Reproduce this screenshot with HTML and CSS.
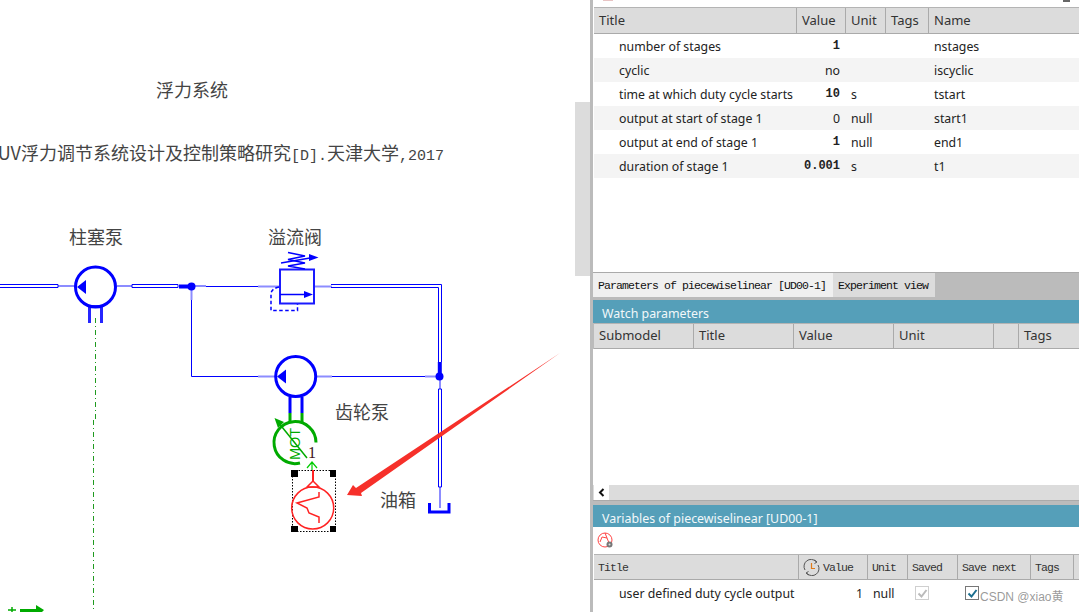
FILE: index.html
```html
<!DOCTYPE html>
<html lang="en">
<head>
    <meta charset="UTF-8">
    <meta name="viewport" content="width=device-width, initial-scale=1.0">
    <title>Hydraulic model - parameters</title>
    <link rel="stylesheet" href="styles.css">
</head>
<body>
    <div class="canvas">
        <span class="label label-title">浮力系统</span>
        <span class="label label-cite">UV浮力调节系统设计及控制策略研究<span class="hw">[D].</span>天津大学<span class="hw">,2017</span></span>
        <span class="label label-plunger">柱塞泵</span>
        <span class="label label-relief">溢流阀</span>
        <span class="label label-gear">齿轮泵</span>
        <span class="label label-tank">油箱</span>

        <svg class="diagram" width="590" height="612" viewBox="0 0 590 612" fill="none">
            <!-- shaft links -->
            <path d="M95.5 318V420M93.5 420V612" stroke="#1f9a1f" stroke-width="1" stroke-dasharray="5 3 1 3"/>

            <!-- pipes -->
            <g stroke="#00f" stroke-width="1">
                <path d="M0 284.5H58V287.5H0"/>
                <path d="M132 284.5H178V287.5H132Z"/>
                <path d="M206 286.5H258"/>
                <path d="M191.5 300V376.5H258"/>
                <path d="M331 284.5H441.5V362M331 287.5H438.5V362"/>
                <path d="M332 376.5H425"/>
                <path d="M438.5 389H441.5V487H438.5Z"/>
            </g>
            <g stroke="#00f" stroke-opacity=".45" stroke-width="2">
                <path d="M58 286H75M117 286H132M191.5 286H206M191.5 290V300"/>
                <path d="M258 286.5H280M314 286.5H332"/>
                <path d="M258 376.5H275M317 376.5H332M425 376.5H436"/>
                <path d="M440 380V389M440 487V508"/>
            </g>
            <path d="M179 286.5H191M439.8 362V376" stroke="#00f" stroke-width="4"/>
            <circle cx="191.5" cy="286.5" r="4" fill="#00f"/>
            <circle cx="439.5" cy="376.5" r="4" fill="#00f"/>
            <path d="M429.5 503V512H449V503" stroke="#00f" stroke-width="3"/>

            <!-- plunger pump -->
            <circle cx="95.5" cy="287" r="20" stroke="#00f" stroke-width="3"/>
            <path d="M77 287L86 280V294Z" fill="#00f"/>
            <path d="M89.5 323V306.5H101.5V323" stroke="#00f" stroke-width="3" stroke-opacity=".85"/>

            <!-- relief valve -->
            <rect x="280" y="269.5" width="34" height="34" stroke="#1a1aff" stroke-width="2"/>
            <path d="M280 294.5H305" stroke="#00f" stroke-width="1.5"/>
            <path d="M313 294.5L304 291V298Z" fill="#00f"/>
            <path d="M288 252.5L305 256L288 259.5L305 263L288 266L305 269" stroke="#00f" stroke-width="1.5"/>
            <path d="M281 263L310 258" stroke="#00f" stroke-width="1.5"/>
            <path d="M318.5 257.5L309 254V261Z" fill="#00f"/>
            <path d="M279 287Q271 289 271 294V310.5H297.5V304" stroke="#00f" stroke-width="1.5" stroke-dasharray="3.5 2.5"/>

            <!-- gear pump -->
            <circle cx="295.7" cy="376.5" r="20" stroke="#00f" stroke-width="3"/>
            <path d="M277 376.5L286 369.5V383.5Z" fill="#00f"/>
            <path d="M290 397V413M302 397V413" stroke="#00f" stroke-width="3"/>
            <path d="M290 413V422M302 413V422" stroke="#0a0" stroke-width="3"/>

            <!-- motor -->
            <path d="M316 442.5A21 21 0 1 0 300 463" stroke="#0a0" stroke-width="3"/>
            <path d="M278 422L307 458" stroke="#0a0" stroke-width="1.5"/>
            <path d="M274.5 418L284 422L278 428Z" fill="#0a0"/>
            <text class="motor-text" transform="translate(300 460) rotate(-90)">MOT</text>
            <text class="motor-num" x="308" y="458">1</text>
            <path d="M307 468L312 462L317 468M312 462V470" stroke="#0c0" stroke-width="1.2"/>

            <!-- piecewise linear source, selected -->
            <rect x="292.5" y="470.5" width="43" height="61" stroke="#000" stroke-dasharray="1.5 1.5"/>
            <path d="M291 470h7v7h-7zM330 470h6v7h-6zM291 526h7v6h-7zM330 526h6v6h-6z" fill="#000"/>
            <g stroke="#f22">
                <path d="M313 470V481" stroke-width="2"/>
                <path d="M313 481L307 487H319Z" stroke-width="1.5"/>
                <circle cx="312.7" cy="508" r="21" stroke-width="1.5"/>
                <path d="M319 492V497L297 503L307 508L309 513L319 517V523" stroke-width="1.5"/>
            </g>

            <!-- annotation arrow -->
            <path d="M560 353L361 493L362 496L347 495L353 485L356 488Z" fill="#f6302a"/>

            <!-- next element, cut off by the bottom edge -->
            <path d="M12 607V612M8 610H16" stroke="#0a0" stroke-width="1.5"/>
            <path d="M20 609H36V605L44 610L42 612H20Z" fill="#0a0"/>
        </svg>
        <div class="canvas-scroll"></div>
    </div>

    <div class="panel">
        <section class="params">
            <div class="top-strip">
                <span class="strip-mark strip-red"></span>
                <span class="strip-mark strip-dark"></span>
            </div>
            <div class="grid-head params-cols">
                <div>Title</div>
                <div>Value</div>
                <div>Unit</div>
                <div>Tags</div>
                <div>Name</div>
            </div>
            <div class="row params-cols">
                <div class="title">number of stages</div>
                <div class="value bold">1</div>
                <div class="unit"></div>
                <div></div>
                <div class="name">nstages</div>
            </div>
            <div class="row alt params-cols">
                <div class="title">cyclic</div>
                <div class="value">no</div>
                <div class="unit"></div>
                <div></div>
                <div class="name">iscyclic</div>
            </div>
            <div class="row params-cols">
                <div class="title">time at which duty cycle starts</div>
                <div class="value bold">10</div>
                <div class="unit">s</div>
                <div></div>
                <div class="name">tstart</div>
            </div>
            <div class="row alt params-cols">
                <div class="title">output at start of stage 1</div>
                <div class="value">0</div>
                <div class="unit">null</div>
                <div></div>
                <div class="name">start1</div>
            </div>
            <div class="row params-cols">
                <div class="title">output at end of stage 1</div>
                <div class="value bold">1</div>
                <div class="unit">null</div>
                <div></div>
                <div class="name">end1</div>
            </div>
            <div class="row alt params-cols">
                <div class="title">duration of stage 1</div>
                <div class="value bold">0.001</div>
                <div class="unit">s</div>
                <div></div>
                <div class="name">t1</div>
            </div>
        </section>

        <div class="tabs">
            <div class="tab tab-active">Parameters of piecewiselinear [UD00-1]</div>
            <div class="tab">Experiment view</div>
        </div>

        <section class="watch">
            <h2 class="band band-watch">Watch parameters</h2>
            <div class="grid-head watch-cols">
                <div>Submodel</div>
                <div>Title</div>
                <div>Value</div>
                <div>Unit</div>
                <div></div>
                <div>Tags</div>
            </div>
            <div class="watch-body"></div>
            <div class="hscroll">
                <div class="hscroll-btn">
                    <svg width="7" height="9" viewBox="0 0 7 9" fill="none"><path d="M5.5 1L2 4.5L5.5 8" stroke="#111" stroke-width="2"/></svg>
                </div>
            </div>
        </section>

        <section class="vars">
            <h2 class="band">Variables of piecewiselinear [UD00-1]</h2>
            <div class="toolbar">
                <svg width="18" height="18" viewBox="0 0 18 18" fill="none">
                    <circle cx="8" cy="8" r="7" stroke="#f44" stroke-width="1"/>
                    <path d="M8 1L10 6L5 5L3 10M10 6L12 11" stroke="#f44" stroke-width="1"/>
                    <circle cx="12.5" cy="12.5" r="3" fill="#777"/>
                    <circle cx="12.5" cy="12.5" r="1" fill="#ddd"/>
                </svg>
            </div>
            <div class="grid-head vars-cols mono">
                <div>Title</div>
                <div class="head-icon">
                    <svg width="17" height="17" viewBox="0 0 17 17" fill="none">
                        <path d="M2 11A7 7 0 0 1 13 2.5M15 6A7 7 0 0 1 4 14.5" stroke="#555" stroke-width="1"/>
                        <path d="M11.5 1L14 3L11.5 4.5M5.5 16L3 14L5.5 12.5" stroke="#555" stroke-width="1"/>
                        <path d="M8.5 4V9.5H12" stroke="#e07b1a" stroke-width="1.2"/>
                    </svg>
                    <span>Value</span>
                </div>
                <div>Unit</div>
                <div>Saved</div>
                <div>Save next</div>
                <div>Tags</div>
                <div></div>
            </div>
            <div class="row vars-cols">
                <div class="title">user defined duty cycle output</div>
                <div class="value">1</div>
                <div class="unit">null</div>
                <div class="check-cell"><span class="check check-off"><svg width="11" height="11" viewBox="0 0 11 11" fill="none"><path d="M1.5 5.5L4.5 8.5L9.5 2" stroke="#bbb" stroke-width="2"/></svg></span></div>
                <div class="check-cell"><span class="check check-on"><svg width="11" height="11" viewBox="0 0 11 11" fill="none"><path d="M1.5 5.5L4.5 8.5L9.5 2" stroke="#1d6f8f" stroke-width="2"/></svg></span></div>
                <div></div>
                <div></div>
            </div>
        </section>
        <span class="watermark">CSDN @xiao黄</span>
    </div>
</body>
</html>
```

FILE: styles.css
```css
* {
    margin: 0;
    padding: 0;
    box-sizing: border-box;
}

html, body {
    height: 612px;
    overflow: hidden;
}

body {
    display: flex;
    background: #fff;
    color: #222;
    font-family: "Noto Sans", "Noto Sans CJK SC", sans-serif;
    font-size: 12.3px;
}

/* Left side: model sketch, free canvas */
.canvas {
    position: relative;
    flex: 0 0 590px;
    height: 612px;
    overflow: hidden;
}

.diagram {
    position: absolute;
    top: 0;
    left: 0;
}

.motor-text {
    font-family: "Liberation Sans", sans-serif;
    font-size: 14.5px;
    fill: #0a0;
}

.motor-num {
    font-family: "Liberation Serif", serif;
    font-size: 16px;
    fill: #401020;
}

.canvas-scroll {
    position: absolute;
    top: 102px;
    right: 0;
    width: 15px;
    height: 174px;
    background: #dcdcdc;
}

.label {
    position: absolute;
    font-family: "Noto Sans CJK SC", sans-serif;
    font-size: 18px;
    line-height: 22px;
    color: #444;
    white-space: nowrap;
}

.label .hw {
    font-family: "Liberation Mono", monospace;
    font-size: 15px;
}

.label-title { left: 156px; top: 78px; }
.label-cite { right: 146px; top: 141px; }
.label-plunger { left: 69px; top: 225px; }
.label-relief { left: 268px; top: 225px; }
.label-gear { left: 335px; top: 400px; }
.label-tank { left: 380px; top: 488px; }

/* Right side: property panels */
.panel {
    position: relative;
    flex: 1;
    min-width: 0;
    display: flex;
    flex-direction: column;
    border-left: 3px solid #bbb;
}

.params {
    flex: 0 0 272px;
    padding-left: 1px;
}

.top-strip {
    display: flex;
    justify-content: space-between;
    height: 7px;
    padding: 0 9px;
}

.strip-mark {
    display: block;
    height: 1px;
}

.strip-red {
    width: 10px;
    background: #e8c4c4;
}

.strip-dark {
    width: 7px;
    height: 2px;
    background: #666;
}

.grid-head {
    display: grid;
    height: 26px;
    background: #dcdcdc;
    border-top: 1px solid #b4b4b4;
    border-bottom: 1px solid #aaa;
    color: #333;
    font-size: 13px;
}

.grid-head > div {
    display: flex;
    align-items: center;
    padding: 0 0 2px 5px;
    border-right: 1px solid #aaa;
    overflow: hidden;
    white-space: nowrap;
}

.grid-head > div:last-child {
    border-right: 0;
}

.params-cols { grid-template-columns: 203px 49px 40px 43px 1fr; }
.watch-cols { grid-template-columns: 100px 100px 100px 100px 25px 1fr; }
.vars-cols { grid-template-columns: 205px 69px 40px 50px 73px 43px 1fr; }

.params .grid-head {
    height: 27px;
}

.row {
    display: grid;
    height: 24px;
    align-items: center;
    white-space: nowrap;
}

.alt {
    background: #f4f4f4;
}

.title {
    padding-left: 25px;
}

.value {
    text-align: right;
    padding-right: 6px;
}

.bold {
    font-family: "Liberation Mono", monospace;
    font-weight: bold;
    font-size: 12px;
}

.unit {
    padding-left: 5px;
}

.name {
    padding-left: 5px;
}

.tabs {
    display: flex;
    flex: 0 0 28px;
    padding-bottom: 3px;
    background: #bbb;
    border-top: 1px solid #aaa;
}

.tab {
    display: flex;
    align-items: center;
    padding: 0 5px;
    background: #dcdcdc;
    font-family: "Liberation Mono", monospace;
    font-size: 11.5px;
    letter-spacing: -.9px;
    color: #111;
    white-space: nowrap;
}

.tab-active {
    width: 240px;
    background: #f0f0f0;
}

.tab:last-child {
    width: 102px;
}

.band {
    height: 23px;
    padding-left: 9px;
    background: #559fb9;
    color: #f2f8fa;
    font-size: 12.4px;
    font-weight: normal;
    line-height: 28px;
}

.watch {
    flex: 1;
    display: flex;
    flex-direction: column;
    padding-bottom: 4px;
    background: #bbb;
}

.watch .grid-head {
    margin-left: 1px;
}

.watch-body {
    flex: 1;
    background: #fff;
}

.hscroll {
    height: 15px;
    padding-left: 1px;
    background: #dcdcdc;
    border-bottom: 1px solid #aaa;
    box-sizing: content-box;
}

.hscroll-btn {
    display: flex;
    align-items: center;
    justify-content: center;
    width: 15px;
    height: 15px;
    background: #fff;
}

.vars {
    flex: 0 0 107px;
    background: #fff;
}

.vars .band {
    height: 22px;
}

.toolbar {
    height: 27px;
    padding: 5px 0 0 4px;
}

.vars .grid-head,
.vars .row {
    margin-left: 1px;
}

.vars .row {
    height: 26px;
}

.vars .value {
    padding-right: 5px;
}

.mono {
    font-family: "Liberation Mono", monospace;
    font-size: 11.5px;
    letter-spacing: -.9px;
}

.grid-head.mono > div {
    padding: 0 0 0 4px;
}

.head-icon {
    gap: 3px;
}

.check-cell {
    padding-left: 7px;
    display: flex;
    align-items: center;
}

.check {
    display: flex;
    align-items: center;
    justify-content: center;
    width: 14px;
    height: 14px;
    border: 1px solid #cfcfcf;
}

.check-on {
    border-color: #777;
}

.watermark {
    position: absolute;
    left: 387px;
    top: 587px;
    font-family: "Liberation Sans", "Noto Sans CJK SC", sans-serif;
    font-size: 12px;
    color: rgba(120, 120, 120, .75);
    white-space: nowrap;
}
```
